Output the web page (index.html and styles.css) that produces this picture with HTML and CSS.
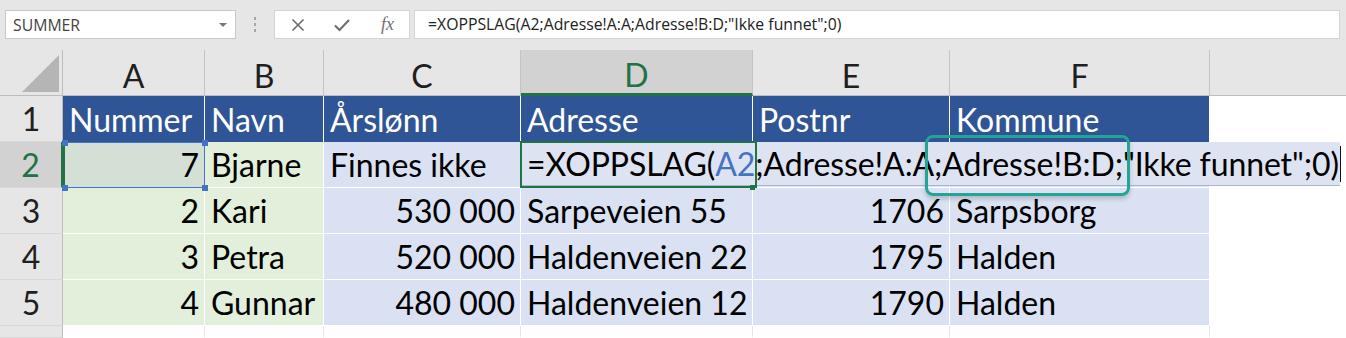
FILE: index.html
```html
<!DOCTYPE html>
<html lang="nb">
<head>
    <meta charset="UTF-8" />
    <title>XOPPSLAG</title>
    <link rel="stylesheet" href="styles.css">
</head>
<body>
    <div class="formula-bar">
        <div class="name-box">
            <span>SUMMER</span>
            <span class="drop"></span>
        </div>
        <div class="grip"><i></i><i></i><i></i></div>
        <div class="fx-buttons">
            <svg class="ico" width="16" height="16" viewBox="0 0 16 16"><path d="M2.5 2.5l11 11M13.5 2.5l-11 11" stroke="#6b6b6b" stroke-width="1.6" fill="none"/></svg>
            <svg class="ico" width="18" height="16" viewBox="0 0 18 16"><path d="M2 8.5l4.5 4.5L16 3" stroke="#6b6b6b" stroke-width="2" fill="none"/></svg>
            <span class="fx">fx</span>
        </div>
        <div class="formula-input">=XOPPSLAG(A2;Adresse!A:A;Adresse!B:D;"Ikke funnet";0)</div>
    </div>

    <div class="sheet">
        <!-- kolonneoverskrifter -->
        <div class="corner"><span class="tri"></span></div>
        <div class="col-head">A</div>
        <div class="col-head">B</div>
        <div class="col-head">C</div>
        <div class="col-head sel">D</div>
        <div class="col-head">E</div>
        <div class="col-head">F</div>
        <div class="col-head last"></div>

        <!-- rad 1 -->
        <div class="row-head">1</div>
        <div class="cell th">Nummer</div>
        <div class="cell th">Navn</div>
        <div class="cell th">Årslønn</div>
        <div class="cell th">Adresse</div>
        <div class="cell th">Postnr</div>
        <div class="cell th">Kommune</div>
        <div class="cell empty"></div>

        <!-- rad 2 -->
        <div class="row-head sel">2</div>
        <div class="cell green num ref">7
            <i class="h tl"></i><i class="h tr"></i><i class="h bl"></i><i class="h br"></i>
        </div>
        <div class="cell green">Bjarne</div>
        <div class="cell blue">Finnes ikke</div>
        <div class="cell blue editing">
            <div class="editor"><span>=XOPPSLAG(<b>A2</b>;Adresse!A:A;Adresse!B:D;"Ikke funnet";0)</span><span class="cursor"></span>
                <div class="mark"></div>
            </div>
            <i class="fill"></i>
        </div>
        <div class="cell blue"></div>
        <div class="cell blue"></div>
        <div class="cell empty"></div>

        <!-- rad 3 -->
        <div class="row-head">3</div>
        <div class="cell green num">2</div>
        <div class="cell green">Kari</div>
        <div class="cell blue num">530 000</div>
        <div class="cell blue">Sarpeveien 55</div>
        <div class="cell blue num">1706</div>
        <div class="cell blue">Sarpsborg</div>
        <div class="cell empty"></div>

        <!-- rad 4 -->
        <div class="row-head">4</div>
        <div class="cell green num">3</div>
        <div class="cell green">Petra</div>
        <div class="cell blue num">520 000</div>
        <div class="cell blue">Haldenveien 22</div>
        <div class="cell blue num">1795</div>
        <div class="cell blue">Halden</div>
        <div class="cell empty"></div>

        <!-- rad 5 -->
        <div class="row-head">5</div>
        <div class="cell green num">4</div>
        <div class="cell green">Gunnar</div>
        <div class="cell blue num">480 000</div>
        <div class="cell blue">Haldenveien 12</div>
        <div class="cell blue num">1790</div>
        <div class="cell blue">Halden</div>
        <div class="cell empty"></div>

        <!-- rad 6 -->
        <div class="row-head"></div>
        <div class="cell blank"></div>
        <div class="cell blank"></div>
        <div class="cell blank"></div>
        <div class="cell blank"></div>
        <div class="cell blank"></div>
        <div class="cell blank"></div>
        <div class="cell empty"></div>
    </div>
</body>
</html>
```

FILE: styles.css
```css
*{
    margin: 0;
    padding: 0;
    box-sizing: border-box;
}
html,body{
    width: 100%;
    height: 100%;
    overflow: hidden;
}
body{
    background: #e6e6e6;
    font-family: Lato, "Open Sans", sans-serif;
}

/* formellinje */
.formula-bar{
    display: flex;
    align-items: flex-start;
    height: 50px;
    padding: 10px 0 0 5px;
    font-family: "Open Sans", sans-serif;
    font-size: 15.8px;
    color: #333;
}
.name-box{
    width: 231px;
    height: 29px;
    background: #fff;
    border: 1px solid #c8c8c8;
    display: flex;
    align-items: center;
    justify-content: space-between;
    padding: 0 8px 0 7px;
    color: #444;
}
.drop{
    width: 0;
    height: 0;
    border-left: 4px solid transparent;
    border-right: 4px solid transparent;
    border-top: 4px solid #777;
}
.grip{
    width: 38px;
    height: 29px;
    display: flex;
    flex-direction: column;
    align-items: center;
    justify-content: center;
    gap: 3px;
}
.grip i{
    width: 2px;
    height: 3px;
    background: #a5a5a5;
}
.fx-buttons{
    width: 136px;
    height: 29px;
    background: #fff;
    border: 1px solid #d4d4d4;
    display: flex;
    align-items: center;
    padding-left: 15px;
    gap: 27px;
}
.fx{
    font-family: "Liberation Serif", serif;
    font-style: italic;
    font-size: 18px;
    color: #707070;
    margin-left: 3px;
}
.formula-input{
    margin-left: 4px;
    width: 926px;
    height: 29px;
    background: #fff;
    border: 1px solid #d4d4d4;
    padding: 2px 0 0 13px;
    color: #222;
    white-space: nowrap;
}

/* regneark */
.sheet{
    display: grid;
    grid-template-columns: 63px 142px 119px 197px 232px 197px 260px 1fr;
    grid-template-rows: 46px 46px 46px 46px 46px 46px 12px;
    font-size: 32px;
    color: #000;
}
.corner{
    position: relative;
    border-right: 1px solid #bdbdbd;
    border-bottom: 1px solid #bdbdbd;
}
.tri{
    position: absolute;
    right: 3px;
    bottom: 3px;
    width: 0;
    height: 0;
    border-left: 37px solid transparent;
    border-bottom: 37px solid #b5b5b5;
}
.col-head{
    border-right: 1px solid #c4c4c4;
    border-bottom: 1px solid #bdbdbd;
    display: flex;
    justify-content: center;
    align-items: center;
    padding-top: 6px;
    color: #1f1f1f;
}
.col-head.last{
    border-right: none;
}
.col-head.sel{
    background: #d2d2d2;
    color: #217346;
    border-bottom: 3px solid #217346;
}
.row-head{
    border-right: 1px solid #bdbdbd;
    border-bottom: 1px solid #d8d8d8;
    display: flex;
    justify-content: center;
    align-items: flex-end;
    padding-bottom: 3px;
    line-height: 38px;
    color: #1f1f1f;
}
.row-head.sel{
    background: #d2d2d2;
    color: #217346;
    border-right: 2px solid #217346;
}

.cell{
    display: flex;
    align-items: flex-end;
    padding: 0 6px 3px 6px;
    line-height: 38px;
    white-space: nowrap;
    border-right: 1px solid #fff;
    border-bottom: 1px solid #fff;
}
.cell.num{
    justify-content: flex-end;
    padding-right: 5px;
}
.th{
    background: #2f5597;
    color: #fff;
    border-bottom: none;
}
.green{
    background: #e2efda;
}
.blue{
    background: #d9e1f2;
}
.empty{
    background: #fff;
    border: none;
}
.blank{
    background: #fff;
    border-right: 1px solid #e6e6e6;
}

/* A2 referanse */
.ref{
    position: relative;
    background: #d4e0d6;
    border: 1px solid #4472c4;
    border-left: 2px solid #217346;
}
.h{
    position: absolute;
    width: 6px;
    height: 6px;
    background: #4472c4;
}
.tl{ left: -3px; top: -3px; }
.tr{ right: -4px; top: -3px; }
.bl{ left: -3px; bottom: -4px; }
.br{ right: -4px; bottom: -4px; }

/* redigering i D2 */
.editing{
    position: relative;
    z-index: 2;
}
.editor{
    position: absolute;
    left: 0;
    top: 0;
    bottom: 1px;
    width: 819px;
    background: #dde3f1;
    display: flex;
    align-items: flex-end;
    padding: 0 0 2px 6px;
    letter-spacing: -0.1px;
    border-bottom: 1px solid #a9b5d3;
}
.editor b{
    font-weight: normal;
    color: #4472c4;
}
.cursor{
    width: 2px;
    height: 36px;
    background: #111;
    margin-left: 1px;
    margin-bottom: 1px;
}
.editing::after{
    content: '';
    position: absolute;
    left: -1px;
    top: -1px;
    width: 233px;
    bottom: -1px;
    border: 2px solid #217346;
}
.fill{
    position: absolute;
    left: 229px;
    bottom: -3px;
    width: 5px;
    height: 5px;
    background: #217346;
    z-index: 3;
}
.mark{
    position: absolute;
    left: 404px;
    top: -7px;
    width: 205px;
    height: 61px;
    border: 3px solid #23a595;
    border-radius: 8px;
    box-shadow: 0 3px 4px rgba(0,0,0,0.18);
}
```
